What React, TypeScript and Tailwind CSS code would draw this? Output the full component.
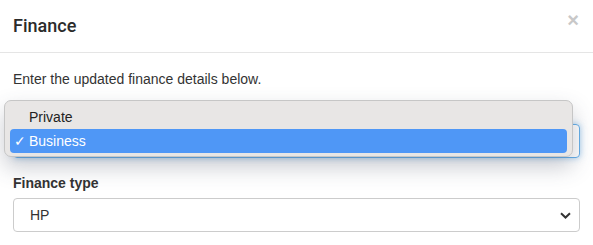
import React from 'react';

function Chevron() {
  return (
    <svg width="11" height="7" viewBox="0 0 11 7" className="text-[#333]">
      <path d="M1 1.2 L5.5 5.5 L10 1.2" fill="none" stroke="currentColor" strokeWidth="2" />
    </svg>
  );
}

export default function App() {
  return (
    <div className="w-full bg-white text-[#333] font-['Liberation_Sans',Arial,sans-serif]">
      <div className="h-[53px] flex items-center justify-between pl-[13px] pr-[14px] border-b border-[#e5e5e5]">
        <h4 className="text-[18px] font-medium leading-none font-['Roboto',Arial,sans-serif] text-[#2b2b2b]">Finance</h4>
        <span className="text-[#c8c8c8] text-[20px] font-bold leading-none -mt-[12px]">×</span>
      </div>

      <div className="px-[13px] pt-[16px]">
        <p className="text-[14px] leading-[20px] mb-[10px]">Enter the updated finance details below.</p>

        <div className="relative mb-[15px]">
          <label className="block text-[14px] font-bold leading-[20px] mb-[5px] invisible">Finance category</label>
          <div className="h-[34px] rounded-[4px] border border-[#66afe9] shadow-[0_0_6px_rgba(102,175,233,0.6)] flex items-center justify-end pr-[8px]">
            <Chevron />
          </div>

          <div className="absolute -left-[9px] top-[1px] w-[569px] h-[57px] bg-[#e8e6e5] border border-[#c6c6c6] rounded-[7px] shadow-[0_10px_22px_rgba(60,70,90,0.28)] pt-[4px] px-[5px] text-[14px]">
            <div className="h-[24px] flex items-center pl-[19px] text-[#222]">Private</div>
            <div className="h-[24px] flex items-center rounded-[4px] bg-[#4f97f6] text-white">
              <span className="w-[19px] pl-[4px] text-[14px]">✓</span>
              <span>Business</span>
            </div>
          </div>
        </div>

        <div>
          <label className="block text-[14px] font-bold leading-[20px] mb-[5px]">Finance type</label>
          <div className="h-[34px] rounded-[4px] border border-[#ccc] flex items-center justify-between pl-[16px] pr-[8px] text-[14px]">
            <span>HP</span>
            <Chevron />
          </div>
        </div>
      </div>
    </div>
  );
}
